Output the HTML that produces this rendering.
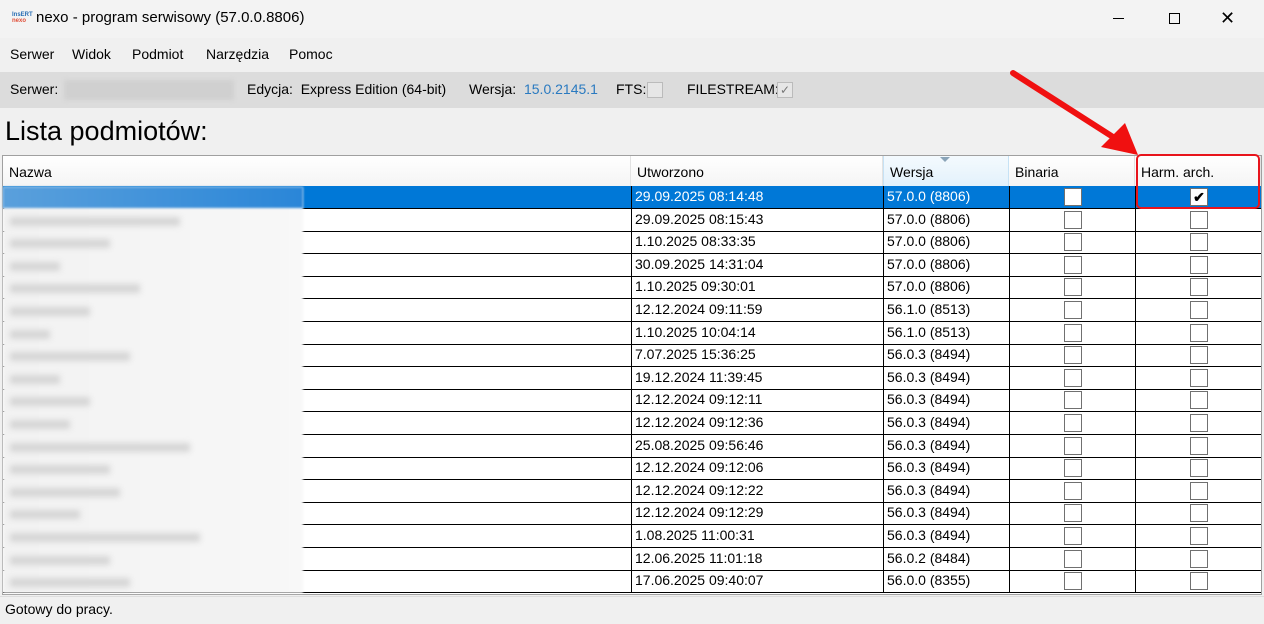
<!DOCTYPE html>
<html><head><meta charset="utf-8"><style>
*{margin:0;padding:0;box-sizing:border-box}
body{width:1264px;height:624px;overflow:hidden;background:#f0f0f0;font-family:"Segoe UI","Liberation Sans",sans-serif;font-size:14px;color:#000;position:relative}
.abs{position:absolute}
#title{left:0;top:0;width:1264px;height:38px;background:#f3f3f3}
#menu{left:0;top:38px;width:1264px;height:34px;background:#f0f0f0}
#info{left:0;top:72px;width:1264px;height:36px;background:#dcdcdc}
#grid{left:2px;top:155px;width:1260px;height:440px;background:#fff;border:1px solid #a0a0a0}
.hd{top:156px;height:31px;background:linear-gradient(#fff,#f4f4f4);border-right:1px solid #e2e2e2;padding:8px 0 0 6px;font-size:14px}
.row{left:3px;width:1258px;height:23px;border-bottom:1px solid #000}
.c{position:absolute;top:0;height:22px;border-left:1px solid #000;padding:2px 0 0 3px;font-size:14px}
.cb{position:absolute;width:18px;height:18px;border:1px solid #707070;background:#fff;top:2px}
.blur{position:absolute;left:3px;top:187px;width:300px;height:406px;background:linear-gradient(90deg,#f2f2f2,#f8f8f8);filter:blur(1px)}
.sm{position:absolute;left:10px;height:9px;background:#d6d6d6;filter:blur(3px)}
#status{left:0;top:596px;width:1264px;height:28px;background:#f0f0f0;border-top:1px solid #ddd;padding:4px 5px;font-size:14px}
</style></head><body>
<div class="abs" id="title">
 <div class="abs" style="left:12px;top:12px;font-size:6px;line-height:6px;font-weight:bold;color:#2a6fb4">InsERT<br><span style="color:#e0503a">nexo</span></div>
 <div class="abs" style="left:36px;top:9px;font-size:15px">nexo - program serwisowy (57.0.0.8806)</div>
 <div class="abs" style="left:1113px;top:18px;width:11px;height:1px;background:#000"></div>
 <div class="abs" style="left:1169px;top:13px;width:11px;height:11px;border:1px solid #000"></div>
 <div class="abs" style="left:1220px;top:8px;font-size:18px">✕</div>
</div>
<div class="abs" id="menu">
 <span class="abs" style="left:10px;top:8px">Serwer</span><span class="abs" style="left:72px;top:8px">Widok</span><span class="abs" style="left:132px;top:8px">Podmiot</span><span class="abs" style="left:206px;top:8px">Narzędzia</span><span class="abs" style="left:289px;top:8px">Pomoc</span>
</div>
<div class="abs" id="info">
 <span class="abs" style="left:10px;top:9px">Serwer:</span>
 <div class="abs" style="left:64px;top:8px;width:170px;height:20px;background:#d0d0d0;filter:blur(2px)"></div>
 <span class="abs" style="left:247px;top:9px">Edycja:&nbsp; Express Edition (64-bit)</span>
 <span class="abs" style="left:469px;top:9px">Wersja:&nbsp; <span style="color:#2a7ac0">15.0.2145.1</span></span>
 <span class="abs" style="left:616px;top:9px">FTS:</span><div class="abs" style="left:647px;top:10px;width:16px;height:16px;border:1px solid #bbb;background:#e6e6e6"></div>
 <span class="abs" style="left:687px;top:9px">FILESTREAM:</span><div class="abs" style="left:777px;top:10px;width:16px;height:16px;border:1px solid #bbb;background:#e6e6e6;font-size:12px;line-height:14px;text-align:center;color:#777">✓</div>
</div>
<div class="abs" style="left:5px;top:116px;font-size:27px">Lista podmiotów:</div>
<div class="abs" id="grid"></div>
<div class="abs hd" style="left:3px;width:628px">Nazwa</div>
<div class="abs hd" style="left:631px;width:252px">Utworzono</div>
<div class="abs hd" style="left:883px;width:126px;background:linear-gradient(#f4fafe,#e2f1fb);border-right:1px solid #c6e2f5;border-left:1px solid #c6e2f5">Wersja<div class="abs" style="left:56px;top:1px;width:0;height:0;border-left:5px solid transparent;border-right:5px solid transparent;border-top:5px solid #8aa4b8"></div></div>
<div class="abs hd" style="left:1009px;width:126px">Binaria</div>
<div class="abs hd" style="left:1135px;width:126px">Harm. arch.</div>
<div id="rows"></div>
<div class="blur"></div>
<div id="sm"></div>
<div class="abs" style="left:3px;top:187px;width:300px;height:21px;background:linear-gradient(90deg,#5aa0dc,#2a86d8);filter:blur(1px)"></div>
<div class="abs" style="left:1136px;top:154px;width:124px;height:55px;border:2px solid #e8141c;border-radius:5px"></div>
<svg class="abs" style="left:1005px;top:65px" width="140" height="95"><line x1="8" y1="8" x2="108" y2="72" stroke="#f01010" stroke-width="6" stroke-linecap="round"/><polygon points="96,82 120,58 133,90" fill="#f01010"/></svg>
<div class="abs" id="status">Gotowy do pracy.</div>
<script>
var d=[["29.09.2025 08:14:48","57.0.0 (8806)"],["29.09.2025 08:15:43","57.0.0 (8806)"],["1.10.2025 08:33:35","57.0.0 (8806)"],["30.09.2025 14:31:04","57.0.0 (8806)"],["1.10.2025 09:30:01","57.0.0 (8806)"],["12.12.2024 09:11:59","56.1.0 (8513)"],["1.10.2025 10:04:14","56.1.0 (8513)"],["7.07.2025 15:36:25","56.0.3 (8494)"],["19.12.2024 11:39:45","56.0.3 (8494)"],["12.12.2024 09:12:11","56.0.3 (8494)"],["12.12.2024 09:12:36","56.0.3 (8494)"],["25.08.2025 09:56:46","56.0.3 (8494)"],["12.12.2024 09:12:06","56.0.3 (8494)"],["12.12.2024 09:12:22","56.0.3 (8494)"],["12.12.2024 09:12:29","56.0.3 (8494)"],["1.08.2025 11:00:31","56.0.3 (8494)"],["12.06.2025 11:01:18","56.0.2 (8484)"],["17.06.2025 09:40:07","56.0.0 (8355)"]];
var w=[150,170,100,50,130,80,40,120,50,80,60,180,100,110,70,190,100,120];
var h="",s2="";
d.forEach(function(r,i){var t=Math.round(186+i*22.6),s=i==0;
if(!s)s2+='<div class="sm" style="top:'+(t+8)+'px;width:'+w[i]+'px"></div>';
h+='<div class="abs row" style="top:'+t+'px;'+(s?'background:#0078d7;color:#fff':'')+'">'+
'<div class="c" style="left:628px;width:252px">'+r[0]+'</div><div class="c" style="left:880px;width:126px">'+r[1]+'</div>'+
'<div class="c" style="left:1006px;width:126px"><div class="cb" style="left:54px"></div></div>'+
'<div class="c" style="left:1132px;width:126px"><div class="cb" style="left:54px;'+(s?'color:#000;font-size:14px;line-height:16px;text-align:center;font-weight:bold':'')+'">'+(s?'✔':'')+'</div></div></div>';});
document.getElementById("rows").innerHTML=h;
document.getElementById("sm").innerHTML=s2;
</script>
</body></html>
